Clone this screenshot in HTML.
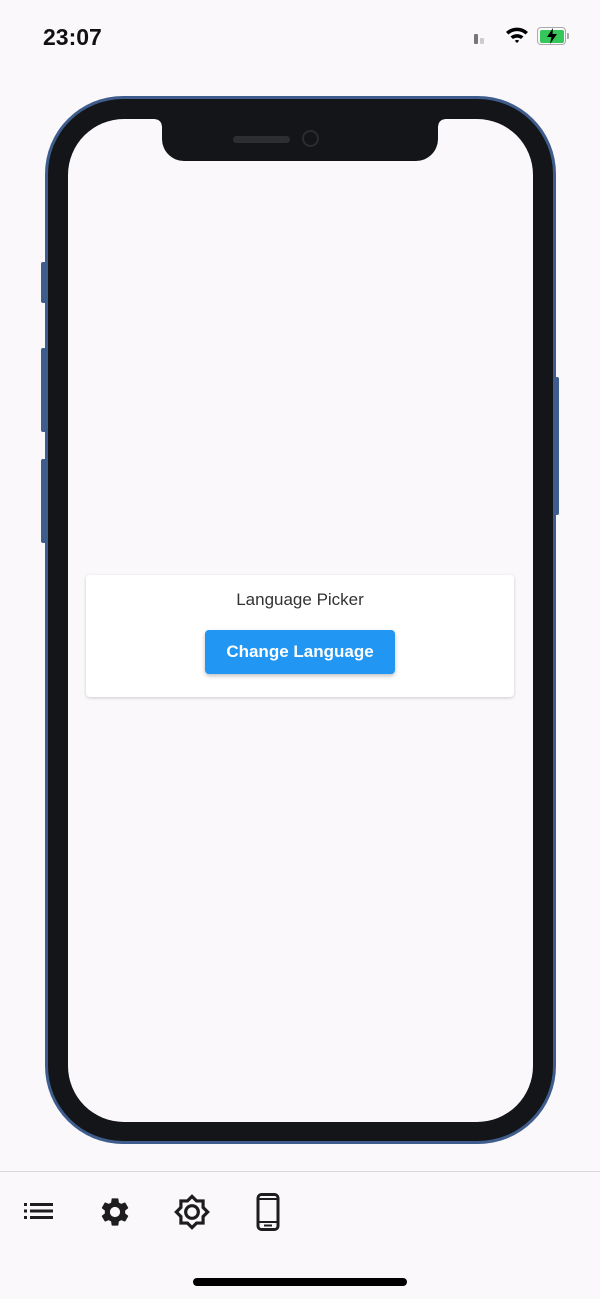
<!DOCTYPE html>
<html><head><meta charset="utf-8"><style>
*{margin:0;padding:0;box-sizing:border-box}
body{width:600px;height:1299px;background:#faf8fb;position:relative;overflow:hidden;font-family:"Liberation Sans",sans-serif}
.a{position:absolute}
</style></head><body>
<div class="a" style="left:43px;top:24px;font-size:23px;font-weight:600;color:#111">23:07</div>
<div class="a" style="left:474px;top:34px;width:4px;height:10px;background:#777;border-radius:1px"></div>
<div class="a" style="left:480px;top:38px;width:4px;height:6px;background:#ccc;border-radius:1px"></div>
<svg class="a" style="left:505px;top:26px" width="24" height="18" viewBox="0 0 24 18"><path d="M1 6 A16 16 0 0 1 23 6 L20.5 8.5 A12.5 12.5 0 0 0 3.5 8.5Z M5.5 10.5 A10 10 0 0 1 18.5 10.5 L16 13 A6.5 6.5 0 0 0 8 13Z M9.8 14.8 A3.5 3.5 0 0 1 14.2 14.8 L12 17Z" fill="#000"/></svg>
<div class="a" style="left:537px;top:27px;width:29px;height:18px;border:1.5px solid #aaa;border-radius:4px;padding:1.5px"><div style="width:100%;height:100%;background:#35c759;border-radius:2px"></div></div>
<div class="a" style="left:567px;top:33px;width:2px;height:6px;background:#aaa;border-radius:0 1px 1px 0"></div>
<svg class="a" style="left:544px;top:27px" width="16" height="18" viewBox="0 0 16 18"><path d="M9 1 L3 10 H7.5 L6 17 L13 7 H8.5 Z" fill="#000"/></svg>

<div class="a" style="left:41px;top:262px;width:6px;height:41px;background:#3f5d8c;border-radius:2px"></div>
<div class="a" style="left:41px;top:348px;width:6px;height:84px;background:#3f5d8c;border-radius:2px"></div>
<div class="a" style="left:41px;top:459px;width:6px;height:84px;background:#3f5d8c;border-radius:2px"></div>
<div class="a" style="left:553px;top:377px;width:6px;height:138px;background:#3f5d8c;border-radius:2px"></div>
<div class="a" style="left:45px;top:96px;width:511px;height:1048px;background:#3f5d8c;border-radius:78px"></div>
<div class="a" style="left:48px;top:99px;width:505px;height:1042px;background:#141518;border-radius:75px"></div>
<div class="a" style="left:68px;top:119px;width:465px;height:1003px;background:#faf8fb;border-radius:56px"></div>
<div class="a" style="left:162px;top:117px;width:276px;height:44px;background:#141518;border-radius:0 0 22px 22px"></div>
<div class="a" style="left:155px;top:119px;width:7px;height:7px;background:radial-gradient(circle at 0 100%,transparent 6.5px,#141518 7px)"></div>
<div class="a" style="left:438px;top:119px;width:7px;height:7px;background:radial-gradient(circle at 100% 100%,transparent 6.5px,#141518 7px)"></div>
<div class="a" style="left:233px;top:136px;width:57px;height:7px;background:#2d2e31;border-radius:4px"></div>
<div class="a" style="left:302px;top:130px;width:17px;height:17px;background:#141518;border:2.5px solid #2b2c30;border-radius:50%"></div>

<div class="a" style="left:86px;top:575px;width:428px;height:122px;background:#fff;border-radius:4px;box-shadow:0 1px 3px rgba(0,0,0,.18)"></div>
<div class="a" style="left:86px;top:590px;width:428px;text-align:center;font-size:17px;color:#333">Language Picker</div>
<div class="a" style="left:205px;top:630px;width:190px;height:44px;background:#2196f3;border-radius:4px;box-shadow:0 2px 4px rgba(0,0,0,.25);color:#fff;font-size:17px;font-weight:bold;text-align:center;line-height:44px">Change Language</div>

<div class="a" style="left:0;top:1171px;width:600px;height:1px;background:#d8d6da"></div>
<svg class="a" style="left:23px;top:1200px" width="32" height="22" viewBox="0 0 32 22"><g fill="#1d1d1f"><rect x="1" y="3" width="3" height="3"/><rect x="1" y="9.5" width="3" height="3"/><rect x="1" y="16" width="3" height="3"/><rect x="7" y="3" width="23" height="3"/><rect x="7" y="9.5" width="23" height="3"/><rect x="7" y="16" width="23" height="3"/></g></svg>
<svg class="a" style="left:98px;top:1195px" width="34" height="34" viewBox="0 0 24 24"><path fill="#1d1d1f" d="M19.14 12.94c.04-.3.06-.61.06-.94 0-.32-.02-.64-.07-.94l2.03-1.580a.49.49 0 00.12-.61l-1.92-3.32a.49.49 0 00-.59-.22l-2.39.96c-.5-.38-1.03-.7-1.62-.94l-.36-2.54a.48.48 0 00-.48-.41h-3.84c-.24 0-.43.17-.47.41l-.36 2.54c-.59.24-1.130.57-1.62.94l-2.39-.96a.49.49 0 00-.59.22L2.74 8.87c-.12.21-.08.47.12.61l2.03 1.58c-.05.3-.09.63-.09.94s.02.64.07.94l-2.03 1.58a.49.49 0 00-.12.61l1.92 3.32c.12.22.37.29.59.22l2.39-.96c.5.38 1.03.7 1.62.94l.36 2.54c.05.24.24.41.48.41h3.84c.24 0 .44-.17.47-.41l.36-2.54c.59-.24 1.13-.56 1.62-.94l2.39.96c.22.08.47 0 .59-.22l1.92-3.32c.12-.22.07-.47-.12-.61l-2.01-1.58zM12 15.6A3.6 3.6 0 1112 8.4a3.6 3.6 0 010 7.2z"/></svg>
<svg class="a" style="left:173px;top:1193px" width="38" height="38" viewBox="0 0 24 24"><path fill="#1d1d1f" d="M20 8.69V4h-4.690L12 .69 8.69 4H4v4.69L.69 12 4 15.31V20h4.69L12 23.31 15.31 20H20v-4.69L23.31 12 20 8.69zm-2 5.79V18h-3.52L12 20.48 9.52 18H6v-3.52L3.52 12 6 9.52V6h3.52L12 3.52 14.48 6H18v3.52L20.48 12 18 14.48zM12 7a5 5 0 100 10 5 5 0 000-10zm0 8a3 3 0 110-6 3 3 0 010 6z"/></svg>
<svg class="a" style="left:256px;top:1193px" width="24" height="38" viewBox="0 0 24 38"><rect x="2" y="1.5" width="20" height="35" rx="3.5" fill="none" stroke="#1d1d1f" stroke-width="3"/><path d="M3 6 H21 M3 29 H21" stroke="#1d1d1f" stroke-width="2"/><rect x="8" y="31.5" width="8" height="2" fill="#1d1d1f"/></svg>
<div class="a" style="left:193px;top:1278px;width:214px;height:8px;background:#000;border-radius:4px"></div>
</body></html>
